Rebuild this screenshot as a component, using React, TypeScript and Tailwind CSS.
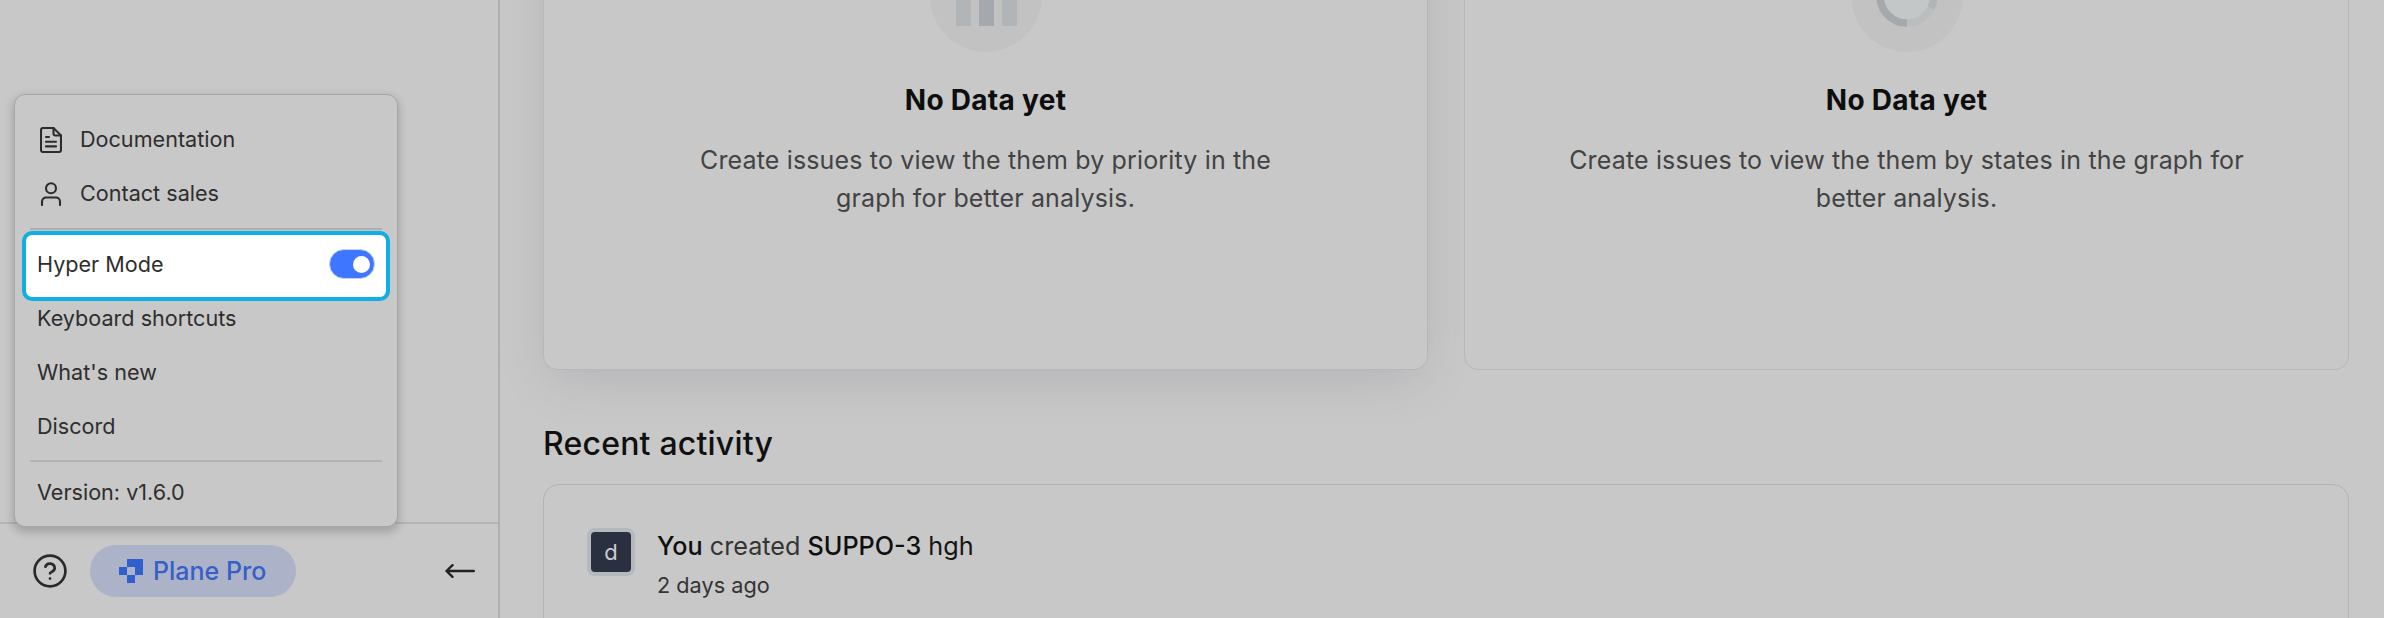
import React from "react";

const menuText = "text-[21.6px] leading-[30px] text-[#2e2e2e]";

function DocIcon() {
  return (
    <svg className="mt-[1.500px] h-[26px] w-[22px] shrink-0" viewBox="0 0 22 26" fill="none" stroke="#2c2c2c" strokeWidth="2.100" strokeLinecap="round" strokeLinejoin="round">
      <path d="M13.5 1H3a2 2 0 0 0-2 2v20a2 2 0 0 0 2 2h16a2 2 0 0 0 2-2V8.500Z" />
      <path d="M13.500 1V6.500a2 2 0 0 0 2 2H21" />
      <path d="M6 10h3M6 14.700h10M6 19.400h10" />
    </svg>
  );
}

function UserIcon() {
  return (
    <svg className="mt-[2px] h-[24px] w-[22px] shrink-0" viewBox="0 0 22 24" fill="none" stroke="#2c2c2c" strokeWidth="2.100" strokeLinecap="round" strokeLinejoin="round">
      <circle cx="11" cy="6.200" r="5" />
      <path d="M2 23v-3.500a4 4 0 0 1 4-4h10a4 4 0 0 1 4 4V23" />
    </svg>
  );
}

function MenuItem({ label, icon }: { label: string; icon?: React.ReactNode }) {
  return (
    <div className="flex h-[54px] items-center pl-[22px]">
      {icon && <span className="mr-[15px] flex w-[28px] justify-center">{icon}</span>}
      <span className={menuText}>{label}</span>
    </div>
  );
}

function HelpMenu() {
  return (
    <div className="absolute left-[14px] top-[94px] z-10 flex h-[433px] w-[384px] flex-col rounded-[11px] border border-[#a6a6a6] bg-[#c8c8c8] pt-[17px] shadow-[0_4px_10px_1px_rgba(0,0,0,0.2)]">
      <MenuItem label="Documentation" icon={<DocIcon />} />
      <MenuItem label="Contact sales" icon={<UserIcon />} />
      <div className="mx-[15px] mt-[8px] h-[2px] bg-[#b0b0b0]" />
      <div className="ml-[7px] mt-[1px] flex h-[70px] w-[368px] items-center justify-between rounded-[10px] border-4 border-[#0faee5] bg-white pl-[11px] pr-[11px] pb-[4px]">
        <span className={menuText}>Hyper Mode</span>
        <div className="flex h-[30px] w-[46px] items-center justify-end rounded-full border border-[#c9d3fa] bg-[#3f76ff] pr-[4px]">
          <div className="size-[17px] rounded-full bg-white" />
        </div>
      </div>
      <div className="-mt-[10px]">
        <MenuItem label="Keyboard shortcuts" />
        <MenuItem label="What's new" />
        <MenuItem label="Discord" />
      </div>
      <div className="mx-[15px] mt-[7px] h-[2px] bg-[#b3b3b3]" />
      <div className="mt-[3px]">
        <MenuItem label="Version: v1.6.0" />
      </div>
    </div>
  );
}

function Sidebar() {
  return (
    <aside className="flex h-full w-[500px] shrink-0 flex-col justify-end border-r-2 border-[#b0b0b0]">
      <div className="flex h-[96px] items-center border-t-2 border-[#b4b4b4] pl-[33px] pr-[23px]">
        <svg className="size-[34px]" viewBox="0 0 34 34" fill="none" stroke="#2a2a2a" strokeWidth="2.700" strokeLinecap="round" strokeLinejoin="round">
          <circle cx="17" cy="17" r="15.400" />
          <path d="M12.400 12.700a4.800 4.800 0 0 1 9.300 1.600c0 3.200-4.700 4-4.700 5" />
          <path d="M17 24.500v.1" />
        </svg>
        <div className="ml-[23px] flex h-[52px] w-[206px] items-center rounded-full bg-[#acb3c8] pl-[29px]">
          <svg className="size-[24px]" viewBox="0 0 24 24" fill="#3060cd">
            <path fillRule="evenodd" d="M8 0h16v16h-8v8H8v-8H0V8h8ZM8 8v8h8V8Z" />
          </svg>
          <span className="ml-[10px] text-[25px] font-medium leading-none text-[#3660c6]">Plane Pro</span>
        </div>
        <svg className="ml-auto h-[14px] w-[30px]" viewBox="0 0 30 14" fill="none" stroke="#222222" strokeWidth="2.400" strokeLinecap="round" strokeLinejoin="round">
          <path d="M28.800 7H1.500M7.500 1.200L1.500 7L7.500 12.800" />
        </svg>
      </div>
    </aside>
  );
}

function EmptyCard({ icon, text, raised }: { icon: React.ReactNode; text: string[]; raised?: boolean }) {
  return (
    <section
      className={
        "-mt-[80px] flex h-[450px] flex-1 flex-col items-center rounded-[14px] border border-[#b6b7b8] bg-[#c8c8c8] " +
        (raised ? "shadow-[0_14px_50px_-10px_rgba(110,112,130,0.28)]" : "")
      }
    >
      <div className="mt-[19px] flex size-[112px] items-center justify-center rounded-full bg-[#c2c2c3]">{icon}</div>
      <h3 className="mt-[29px] text-[28px] font-bold leading-[38px] tracking-[0.3px] text-[#0e0e0e]">No Data yet</h3>
      <p className="mt-[22px] text-center text-[25px] leading-[38px] tracking-[0.155px] text-[#434343]">
        {text[0]}
        <br />
        {text[1]}
      </p>
    </section>
  );
}

function BarsIcon() {
  return (
    <svg className="size-[62px]" viewBox="0 0 62 62">
      <path fill="#b1b5b8" d="M1 10h15v51H1ZM47 10h15v51H47Z" />
      <path fill="#a5a8ad" d="M24 0h15v61H24Z" />
    </svg>
  );
}

function RingIcon() {
  return (
    <svg className="size-[62px]" viewBox="0 0 62 62" fill="none" strokeWidth="7.500">
      <circle cx="31" cy="31" r="24" fill="#c4c7c7" />
      <circle cx="31" cy="31" r="27" stroke="#bbbdbe" />
      <path d="M31 58A27 27 0 0 1 31 4" stroke="#a5a9ab" />
      <path d="M31 4A27 27 0 0 1 55 43" stroke="#b1b5b6" />
    </svg>
  );
}

export default function App() {
  return (
    <div className="relative flex h-[618px] w-[2384px] overflow-hidden bg-[#c8c8c8] font-['Inter',sans-serif]">
      <Sidebar />
      <main className="flex min-w-0 flex-1 flex-col pl-[43px] pr-[35px]">
        <div className="flex shrink-0 gap-[36px]">
          <EmptyCard raised icon={<BarsIcon />} text={["Create issues to view the them by priority in the", "graph for better analysis."]} />
          <EmptyCard icon={<RingIcon />} text={["Create issues to view the them by states in the graph for", "better analysis."]} />
        </div>
        <h2 className="relative mt-[54px] text-[32px] font-medium leading-[40px] tracking-[0.200px] text-[#101010]">Recent activity</h2>
        <section className="mt-[20px] flex h-[200px] shrink-0 rounded-[16px] border border-[#b3b4b5] bg-[#c8c8c8] pl-[43px] pt-[43px]">
          <div className="flex size-[48px] items-center justify-center rounded-[8px] border-4 border-[#b5b9be] bg-[#2b3040] text-[22px] leading-none text-[#c8cbd0]">d</div>
          <div className="ml-[22px] mt-[3px]">
            <p className="text-[25.200px] leading-[30px] text-[#353535]">
              <span className="font-medium text-[#0f0f0f]">You</span> created <span className="font-medium text-[#0f0f0f]">SUPPO-3</span> <span className="text-[#151515]">hgh</span>
            </p>
            <p className="mt-[9px] text-[21.700px] leading-[30px] text-[#343434]">2 days ago</p>
          </div>
        </section>
      </main>
      <HelpMenu />
    </div>
  );
}
